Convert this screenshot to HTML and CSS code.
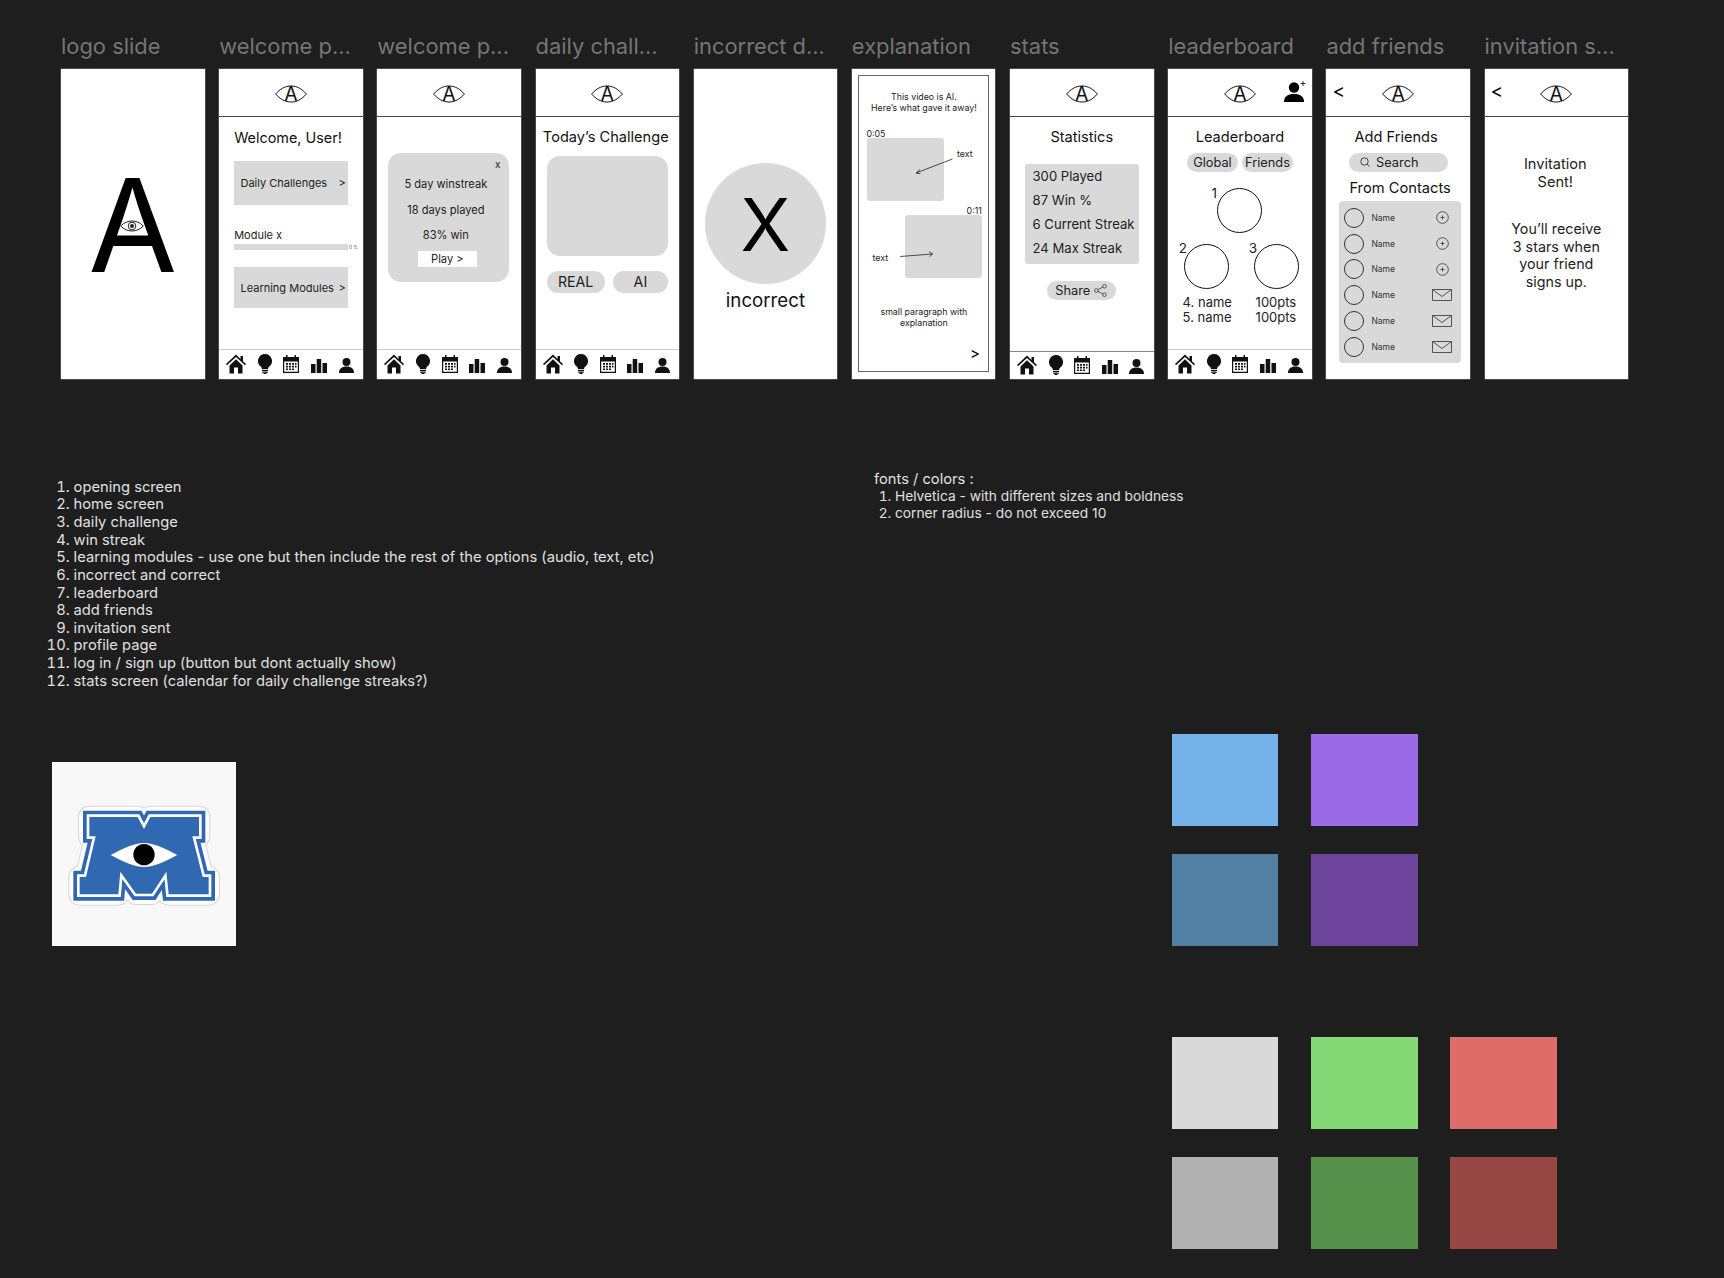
FILE: index.html
```html
<!DOCTYPE html>
<html lang="en">
<head>
<meta charset="utf-8">
<title>Wireframes</title>
<link rel="stylesheet" href="styles.css">
</head>
<body>
<svg class="defs" aria-hidden="true">
  <symbol id="eye" viewBox="0 0 32 18"><path d="M.6 9C5 4 10 1 16 1s11 3 15.400 8C27 14 22 17 16 17S5 14 .6 9z" fill="none" stroke="#111" stroke-width="1"/></symbol>
  <symbol id="home" viewBox="0 0 20 20"><path d="M10 .5 0 10l1 1.200L10 3l9 8.200 1-1.200-3-2.800V2h-2.500v2.900z"/><path d="M3.500 11.500 10 5.200l6.500 6.300V19.500H12v-6H8v6H3.500z"/></symbol>
  <symbol id="bulb" viewBox="0 0 14 20"><path d="M7 0a7 7 0 0 1 4.300 12.500c-.9.800-1.100 1.600-1.200 2.500H3.900c-.1-.9-.3-1.700-1.200-2.500A7 7 0 0 1 7 0z"/><rect x="4" y="15.800" width="6" height="1.300"/><rect x="4.300" y="17.600" width="5.400" height="1.200"/><rect x="5.500" y="19" width="3" height="1"/></symbol>
  <symbol id="cal" viewBox="0 0 16 18"><path d="M3 0h1.500v2h7V0H13v2h3v16H0V2h3zM1.200 6.500v10.300h13.600V6.500z"/><path d="M3 8h2v1.700H3zm3 0h2v1.700H6zm3 0h2v1.700H9zm3 0h1.500v1.700H12zM3 10.700h2v1.700H3zm3 0h2v1.700H6zm3 0h2v1.700H9zm3 0h1.500v1.700H12zM3 13.400h2v1.700H3zm3 0h2v1.700H6zm3 0h2v1.700H9z"/></symbol>
  <symbol id="bars" viewBox="0 0 16 14"><rect y="5" width="4.500" height="9"/><rect x="5.700" width="4.500" height="14"/><rect x="11.500" y="4" width="4.500" height="10"/></symbol>
  <symbol id="user" viewBox="0 0 15 15"><circle cx="7.500" cy="4" r="4"/><path d="M0 15c0-4 2.500-6.500 7.500-6.500S15 11 15 15z"/></symbol>
  <symbol id="plus" viewBox="0 0 13 13"><circle cx="6.500" cy="6.500" r="5.800" fill="none" stroke="#333" stroke-width=".8"/><path d="M6.500 4.500v4M4.500 6.500h4" stroke="#333" stroke-width=".8"/></symbol>
  <symbol id="mail" viewBox="0 0 20 12"><path d="M.5.500h19v11H.5zM.5.500 10 7.500 19.500.500" fill="none" stroke="#444" stroke-width=".9"/></symbol>
  <symbol id="mag" viewBox="0 0 10 10"><circle cx="4.500" cy="4.500" r="3.700" fill="none" stroke="#222" stroke-width=".8"/><path d="m7.200 7.200 2.300 2.300" stroke="#222" stroke-width=".8"/></symbol>
</svg>

<main class="page">
  <section class="screens">
    <article class="col">
      <h3 class="label">logo slide</h3>
      <div class="screen screen-logo">
        <div class="big-a">A<svg class="big-eye" viewBox="0 0 24 12"><path d="M.7 6C4 2.500 8 1 12 1s8 1.500 11.300 5C20 9.500 16 11 12 11S4 9.500.7 6z" fill="#fff" stroke="#222" stroke-width="1"/><circle cx="12" cy="6" r="3.800" fill="none" stroke="#222"/><circle cx="12" cy="6" r="2" fill="#222"/></svg></div>
      </div>
    </article>

    <article class="col">
      <h3 class="label">welcome p...</h3>
      <div class="screen">
        <header class="topbar"><span class="logo"><svg class="eye"><use href="#eye"/></svg><span class="logo-a">A</span></span></header>
        <div class="body home">
          <p class="greeting">Welcome, User!</p>
          <div class="menu-card card-a"><span>Daily Challenges</span><span>&gt;</span></div>
          <p class="module">Module x</p>
          <div class="progress"><span class="track"></span><span class="pct">0 %</span></div>
          <div class="menu-card card-b"><span>Learning Modules</span><span>&gt;</span></div>
        </div>
        <nav class="nav"><svg class="i-home"><use href="#home"/></svg><svg class="i-bulb"><use href="#bulb"/></svg><svg class="i-cal"><use href="#cal"/></svg><svg class="i-bars"><use href="#bars"/></svg><svg class="i-user"><use href="#user"/></svg></nav>
      </div>
    </article>

    <article class="col">
      <h3 class="label">welcome p...</h3>
      <div class="screen">
        <header class="topbar"><span class="logo"><svg class="eye"><use href="#eye"/></svg><span class="logo-a">A</span></span></header>
        <div class="body">
          <div class="popup">
            <span class="close">x</span>
            <p>5 day winstreak</p>
            <p>18 days played</p>
            <p>83% win</p>
            <span class="play">Play &gt;</span>
          </div>
        </div>
        <nav class="nav"><svg class="i-home"><use href="#home"/></svg><svg class="i-bulb"><use href="#bulb"/></svg><svg class="i-cal"><use href="#cal"/></svg><svg class="i-bars"><use href="#bars"/></svg><svg class="i-user"><use href="#user"/></svg></nav>
      </div>
    </article>

    <article class="col">
      <h3 class="label">daily chall...</h3>
      <div class="screen">
        <header class="topbar"><span class="logo"><svg class="eye"><use href="#eye"/></svg><span class="logo-a">A</span></span></header>
        <div class="body challenge">
          <p class="title">Today’s Challenge</p>
          <div class="video"></div>
          <div class="answers"><span class="answer real">REAL</span><span class="answer ai">AI</span></div>
        </div>
        <nav class="nav"><svg class="i-home"><use href="#home"/></svg><svg class="i-bulb"><use href="#bulb"/></svg><svg class="i-cal"><use href="#cal"/></svg><svg class="i-bars"><use href="#bars"/></svg><svg class="i-user"><use href="#user"/></svg></nav>
      </div>
    </article>

    <article class="col">
      <h3 class="label">incorrect d...</h3>
      <div class="screen screen-wrong">
        <div class="x-circle">X</div>
        <p class="wrong-text">incorrect</p>
      </div>
    </article>

    <article class="col">
      <h3 class="label">explanation</h3>
      <div class="screen screen-explain">
        <div class="explain">
          <p class="ex-title">This video is AI.<br>Here’s what gave it away!</p>
          <p class="time t1">0:05</p>
          <div class="clip clip-1"></div>
          <p class="time t2">0:11</p>
          <div class="clip clip-2"></div>
          <span class="note note-1">text</span>
          <span class="note note-2">text</span>
          <svg class="arrows" viewBox="0 0 130 296"><path d="M93.500 83 57 97m0 0 4-3.500M57 97l4.500 .8" fill="none" stroke="#222" stroke-width=".8"/><path d="M41 180.500 73.500 178m0 0-3.500-2.300m3.500 2.300-3 2.700" fill="none" stroke="#222" stroke-width=".8"/></svg>
          <p class="ex-para">small paragraph with<br>explanation</p>
          <p class="next">&gt;</p>
        </div>
      </div>
    </article>

    <article class="col">
      <h3 class="label">stats</h3>
      <div class="screen">
        <header class="topbar"><span class="logo"><svg class="eye"><use href="#eye"/></svg><span class="logo-a">A</span></span></header>
        <div class="body">
          <p class="title">Statistics</p>
          <div class="stat-box"><p>300 Played</p><p>87 Win %</p><p>6 Current Streak</p><p>24 Max Streak</p></div>
          <div class="share">Share <svg class="share-i" viewBox="0 0 13 13"><circle cx="10.500" cy="2.300" r="1.800"/><circle cx="2.300" cy="6.500" r="1.800"/><circle cx="10.500" cy="10.700" r="1.800"/><path d="M8.900 3.100 3.900 5.700M3.900 7.300l5 2.600"/></svg></div>
        </div>
        <nav class="nav nav-low"><svg class="i-home"><use href="#home"/></svg><svg class="i-bulb"><use href="#bulb"/></svg><svg class="i-cal"><use href="#cal"/></svg><svg class="i-bars"><use href="#bars"/></svg><svg class="i-user"><use href="#user"/></svg></nav>
      </div>
    </article>

    <article class="col">
      <h3 class="label">leaderboard</h3>
      <div class="screen">
        <header class="topbar"><span class="logo"><svg class="eye"><use href="#eye"/></svg><span class="logo-a">A</span></span>
          <svg class="add-user" viewBox="0 0 22 21"><circle cx="10" cy="6.500" r="5.200"/><path d="M0 21c0-5.500 3.800-8 10-8s10 2.500 10 8z"/><path d="M19 0v5M16.500 2.500h5" stroke="#000" stroke-width=".8"/></svg></header>
        <div class="body">
          <p class="title">Leaderboard</p>
          <div class="tabs"><span class="tab">Global</span><span class="tab">Friends</span></div>
          <div class="podium-top"><div class="medal"><span class="rank rank-1">1</span></div></div>
          <div class="podium-row"><div class="medal"><span class="rank">2</span></div><div class="medal"><span class="rank">3</span></div></div>
          <div class="scores"><span>4. name</span><span>100pts</span><span>5. name</span><span>100pts</span></div>
        </div>
        <nav class="nav"><svg class="i-home"><use href="#home"/></svg><svg class="i-bulb"><use href="#bulb"/></svg><svg class="i-cal"><use href="#cal"/></svg><svg class="i-bars"><use href="#bars"/></svg><svg class="i-user"><use href="#user"/></svg></nav>
      </div>
    </article>

    <article class="col">
      <h3 class="label">add friends</h3>
      <div class="screen">
        <header class="topbar"><span class="back">&lt;</span><span class="logo"><svg class="eye"><use href="#eye"/></svg><span class="logo-a">A</span></span></header>
        <div class="body">
          <p class="title friends-title">Add Friends</p>
          <div class="search"><svg class="mag"><use href="#mag"/></svg>Search</div>
          <p class="title contacts-title">From Contacts</p>
          <div class="contacts">
            <div class="contact"><span class="avatar"></span><span class="name">Name</span><svg class="plus"><use href="#plus"/></svg></div>
            <div class="contact"><span class="avatar"></span><span class="name">Name</span><svg class="plus"><use href="#plus"/></svg></div>
            <div class="contact"><span class="avatar"></span><span class="name">Name</span><svg class="plus"><use href="#plus"/></svg></div>
            <div class="contact"><span class="avatar"></span><span class="name">Name</span><svg class="mail"><use href="#mail"/></svg></div>
            <div class="contact"><span class="avatar"></span><span class="name">Name</span><svg class="mail"><use href="#mail"/></svg></div>
            <div class="contact"><span class="avatar"></span><span class="name">Name</span><svg class="mail"><use href="#mail"/></svg></div>
          </div>
        </div>
      </div>
    </article>

    <article class="col">
      <h3 class="label">invitation s...</h3>
      <div class="screen">
        <header class="topbar"><span class="back">&lt;</span><span class="logo"><svg class="eye"><use href="#eye"/></svg><span class="logo-a">A</span></span></header>
        <div class="body invite">
          <p class="invite-head">Invitation<br>Sent!</p>
          <p class="invite-text">You’ll receive<br>3 stars when<br>your friend<br>signs up.</p>
        </div>
      </div>
    </article>
  </section>

  <section class="notes">
    <ol class="todo">
      <li>opening screen</li>
      <li>home screen</li>
      <li>daily challenge</li>
      <li>win streak</li>
      <li>learning modules - use one but then include the rest of the options (audio, text, etc)</li>
      <li>incorrect and correct</li>
      <li>leaderboard</li>
      <li>add friends</li>
      <li>invitation sent</li>
      <li>profile page</li>
      <li>log in / sign up (button but dont actually show)</li>
      <li>stats screen (calendar for daily challenge streaks?)</li>
    </ol>
    <div class="guide">
      <p>fonts / colors :</p>
      <ol>
        <li>Helvetica - with different sizes and boldness</li>
        <li>corner radius - do not exceed 10</li>
      </ol>
    </div>
  </section>

  <section class="assets">
    <div class="ref-card">
      <svg class="ref-logo" viewBox="35 35 552 552">
        <defs><path id="mshape" d="M147 200H292L311 236 330 200H476V258H456L487 380H505V432H385L378 364 335 430H287L240 364 234 432H118V380H137L166 258H147Z"/></defs>
        <use href="#mshape" fill="#fff" stroke="#d6d6d6" stroke-width="68" stroke-linejoin="round"/>
        <use href="#mshape" fill="#fff" stroke="#fff" stroke-width="62" stroke-linejoin="round"/>
        <use href="#mshape" fill="#2f68b0" stroke="#2f68b0" stroke-width="38" stroke-linejoin="miter" stroke-miterlimit="3"/>
        <use href="#mshape" fill="#fff" stroke="#fff" stroke-width="16" stroke-linejoin="miter" stroke-miterlimit="3"/>
        <use href="#mshape" fill="#3069b1"/>
        <path d="M211 314C255 290 285 278 311 278s56 12 100 36C367 338 337 350 311 350s-56-12-100-36z" fill="#fff"/>
        <circle cx="311" cy="313" r="32" fill="#000"/>
      </svg>
    </div>
    <div class="palette">
      <div class="swatches">
        <span class="swatch sw-blue"></span><span class="swatch sw-purple"></span><span class="swatch sw-none"></span>
        <span class="swatch sw-blue-d"></span><span class="swatch sw-purple-d"></span><span class="swatch sw-none"></span>
      </div>
      <div class="swatches">
        <span class="swatch sw-grey"></span><span class="swatch sw-green"></span><span class="swatch sw-red"></span>
        <span class="swatch sw-grey-d"></span><span class="swatch sw-green-d"></span><span class="swatch sw-red-d"></span>
      </div>
    </div>
  </section>
</main>
</body>
</html>
```

FILE: styles.css
```css
* { box-sizing: border-box; }
html, body { margin: 0; padding: 0; }
body {
  width: 1724px;
  height: 1278px;
  overflow: hidden;
  background: #1e1e1e;
  font-family: Inter, "Liberation Sans", sans-serif;
  color: #111;
}
p, h3, ol { margin: 0; padding: 0; font-weight: 400; }
.defs { display: none; }

.screens { display: flex; gap: 14.680px; padding: 33px 0 0 61px; }
.col { width: 143.500px; flex: none; }
.label { height: 26px; line-height: 26px; margin-bottom: 10px; font-size: 21.900px; color: #757575; white-space: nowrap; }
.screen { position: relative; display: flex; flex-direction: column; width: 143.500px; height: 310px; background: #fff; box-shadow: 0 0 0 .5px #777; }

.topbar { position: relative; flex: none; display: flex; align-items: center; justify-content: center; height: 48px; border-bottom: 1px solid #444; padding-top: 2px; }
.logo { position: relative; display: block; width: 32px; height: 18px; }
.eye { display: block; width: 32px; height: 18px; fill: none; }
.logo-a { position: absolute; left: 0; right: 0; top: 0; text-align: center; font-size: 19.500px; line-height: 18px; color: #111; }
.back { position: absolute; left: 6px; top: 12px; font-size: 19px; line-height: 22px; color: #000; }
.add-user { position: absolute; right: 6px; top: 12px; width: 22px; height: 21px; fill: #000; }

.body { flex: 1; min-height: 0; }
.nav { flex: none; display: flex; align-items: center; gap: 11.600px; height: 30px; padding: 0 0 1px 7px; border-top: 1.500px solid #c9c9c9; fill: #111; }
.nav-low { height: 28px; border-top: 1px solid #888; }
.i-home { width: 20px; height: 20px; }
.i-bulb { width: 14px; height: 20px; }
.i-cal { width: 16px; height: 18px; }
.i-bars { width: 16px; height: 14px; margin-top: 3px; }
.i-user { width: 15px; height: 15px; margin-top: 2px; }

.title { margin-top: 11.200px; font-size: 14.600px; line-height: 18px; text-align: center; }

.screen-logo { align-items: center; }
.big-a { position: relative; margin-top: 78px; font-size: 129px; line-height: 156px; color: #000; }
.big-eye { position: absolute; left: 32px; top: 73px; width: 24px; height: 12px; }

.home { padding: 12px 0 0 15px; }
.greeting { font-size: 14.400px; line-height: 18px; }
.menu-card { display: flex; align-items: center; justify-content: space-between; width: 114px; padding: 0 2.500px 0 6.300px; background: #d9d9d9; font-size: 11px; color: #222; }
.card-a { height: 44px; margin-top: 14px; }
.card-b { height: 41px; margin-top: 17px; }
.module { margin-top: 22.500px; font-size: 11px; line-height: 14px; color: #222; }
.progress { display: flex; align-items: center; gap: 1px; margin-top: 2.500px; height: 6px; }
.track { width: 113.500px; height: 5.700px; background: #d9d9d9; }
.pct { font-size: 5px; color: #555; white-space: nowrap; }

.popup { position: relative; width: 121px; height: 129px; margin: 36px 0 0 11px; padding: 24px 6px 0 0; border-radius: 13px; background: #d9d9d9; text-align: center; font-size: 11.100px; color: #222; }
.popup p { line-height: 14px; margin-bottom: 11.500px; }
.close { position: absolute; top: 5px; right: 9px; font-size: 10px; line-height: 13px; }
.play { display: block; width: 59px; height: 16.700px; margin: -2.800px 0 0 29.500px; background: #fff; font-size: 11.100px; line-height: 16.700px; }

.challenge .title { margin-right: 3px; }
.video { width: 121.500px; height: 100px; margin: 10.200px 0 0 11.400px; border-radius: 13px; background: #d9d9d9; }
.answers { display: flex; gap: 8px; margin: 14.500px 0 0 11.400px; }
.answer { height: 22.500px; border-radius: 11.500px; background: #d9d9d9; font-size: 14.200px; line-height: 22px; text-align: center; color: #222; }
.real { width: 58.500px; padding-right: 1px; }
.ai { width: 55px; padding-right: 1px; }

.screen-wrong { align-items: center; padding-top: 94.300px; }
.x-circle { width: 121px; height: 121px; border-radius: 50%; background: #d9d9d9; font-size: 73px; line-height: 124px; text-align: center; color: #000; }
.wrong-text { margin-top: 6.200px; font-size: 18.700px; line-height: 22px; color: #111; }

.screen-explain { padding: 6.300px 6px 6.800px 6.600px; }
.explain { position: relative; height: 100%; border: 1.500px solid #666; font-size: 8.800px; color: #222; }
.ex-title { padding-top: 14.700px; line-height: 11px; text-align: center; }
.time { line-height: 11px; }
.t1 { margin: 15px 0 -1px 7px; }
.t2 { margin-top: 4px; margin-bottom: -1px; padding-right: 6.500px; text-align: right; }
.clip { height: 63px; width: 76.700px; border-radius: 3px; background: #d9d9d9; }
.clip-1 { margin-left: 7.500px; }
.clip-2 { margin-left: 45.500px; }
.note { position: absolute; line-height: 11px; }
.note-1 { left: 97.500px; top: 72px; }
.note-2 { left: 13px; top: 176px; }
.arrows { position: absolute; left: 0; top: 0; width: 130px; height: 296px; }
.ex-para { margin-top: 29.500px; line-height: 10.500px; text-align: center; }
.next { position: absolute; right: 8.500px; bottom: 10px; font-size: 15px; line-height: 15px; color: #000; }

.stat-box { width: 114px; height: 99.700px; margin: 17.800px 0 0 15px; padding: 4.200px 0 0 7.500px; border-radius: 3px; background: #d9d9d9; font-size: 13.100px; color: #222; white-space: nowrap; }
.stat-box p { line-height: 16px; margin-bottom: 7.800px; }
.share { display: flex; align-items: center; justify-content: center; gap: 4px; width: 69.500px; height: 19.700px; margin: 17px 0 0 36.500px; border-radius: 10px; background: #d9d9d9; font-size: 12.800px; line-height: 20px; color: #222; }
.share-i { width: 13px; height: 13px; fill: none; stroke: #222; stroke-width: .7; }

.tabs { display: flex; justify-content: center; gap: 4px; margin-top: 6.500px; }
.tab { width: 51px; height: 19px; border-radius: 10px; background: #d9d9d9; font-size: 12.800px; line-height: 19px; text-align: center; color: #222; }
.medal { position: relative; width: 45px; height: 45px; border: 1.200px solid #111; border-radius: 50%; }
.rank { position: absolute; left: -6px; top: -4.500px; font-size: 13.500px; line-height: 16px; color: #222; }
.podium-top { margin: 16.500px 0 0 48.400px; }
.podium-row { display: flex; gap: 25px; margin: 10.500px 0 0 15.500px; }
.scores { display: grid; grid-template-columns: 73px 1fr; margin: 6px 0 0 14.400px; font-size: 13px; line-height: 15.700px; color: #222; }

.friends-title { margin-right: 4px; }
.search { display: flex; align-items: center; width: 99px; height: 19px; margin: 6.500px 0 0 22.700px; padding-left: 11px; border-radius: 10px; background: #d9d9d9; font-size: 12.800px; color: #222; }
.mag { width: 10px; height: 10px; margin-right: 6px; }
.contacts-title { margin-top: 7.500px; padding-left: 4px; font-size: 14.700px; }
.contacts { display: flex; flex-direction: column; justify-content: space-between; width: 121.400px; height: 162px; margin: 4px 0 0 13px; padding: 6.500px 9px 6px 4.500px; border-radius: 4px; background: #d9d9d9; }
.contact { display: flex; align-items: center; height: 20px; }
.avatar { flex: none; width: 20px; height: 20px; border: 1px solid #333; border-radius: 50%; }
.name { flex: 1; margin-left: 7.500px; font-size: 8.500px; color: #333; }
.plus { width: 13px; height: 13px; margin-right: 2.500px; }
.mail { width: 20px; height: 12px; }

.invite { text-align: center; font-size: 14.300px; line-height: 17.600px; color: #222; }
.invite-head { margin: 37.500px 2px 0 0; font-size: 14.600px; line-height: 18px; }
.invite-text { margin: 29.500px 0 0; }

.notes { display: flex; margin-top: 91.800px; height: 218.700px; font-size: 14.700px; color: #e0e0e0; }
.todo { width: 800.400px; margin: 8px 0 0 73.600px; flex: none; font-size: 14.720px; line-height: 17.620px; }
.guide { line-height: 17px; }
.guide ol { padding-left: 21px; font-size: 13.760px; }

.assets { display: flex; align-items: flex-start; margin-top: 44.500px; padding-left: 51.700px; }
.ref-card { flex: none; width: 184px; height: 184px; margin-top: 28px; background: #f8f8f8; }
.ref-logo { display: block; width: 184px; height: 184px; }
.palette { display: flex; flex-direction: column; gap: 90.800px; margin-left: 936.300px; }
.swatches { display: grid; grid-template-columns: repeat(3, 106.500px); gap: 27.300px 32.700px; }
.swatch { height: 92.400px; }
.sw-blue { background: #76b2ea; }
.sw-purple { background: #9a69e6; }
.sw-blue-d { background: #5180a3; }
.sw-purple-d { background: #6d449c; }
.sw-grey { background: #d9d9d9; }
.sw-green { background: #83d875; }
.sw-red { background: #de6c68; }
.sw-grey-d { background: #b1b1b1; }
.sw-green-d { background: #55914b; }
.sw-red-d { background: #974845; }
```
